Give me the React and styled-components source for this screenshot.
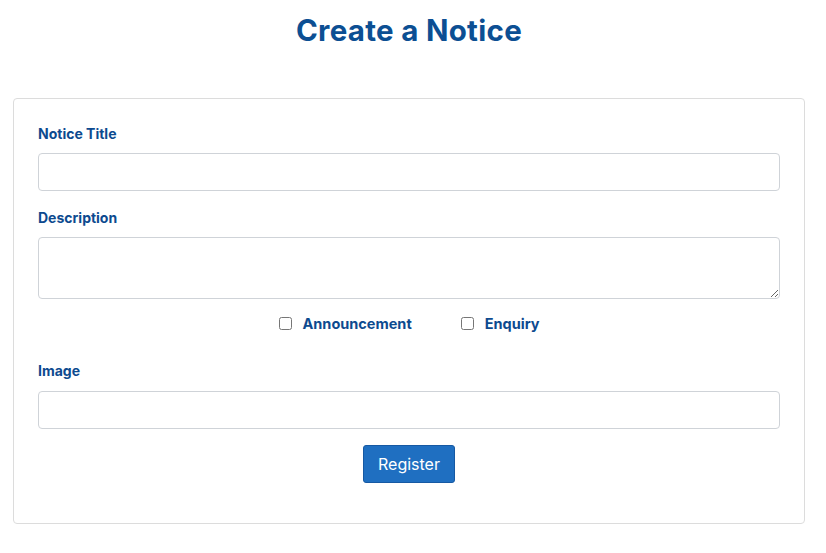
import React from "react";
import styled, { createGlobalStyle } from "styled-components";

const Global = createGlobalStyle`
  body {
    margin: 0;
    background: #ffffff;
    font-family: Inter, "Noto Sans", sans-serif;
  }
  * { box-sizing: border-box; }
`;

const App = () => {
  return (
    <>
      <Global />
      <S.Page>
        <S.Title>Create a Notice</S.Title>
        <S.Card>
          <S.Field>
            <S.Label>Notice Title</S.Label>
            <S.Input type="text" />
          </S.Field>
          <S.Field>
            <S.Label>Description</S.Label>
            <S.TextArea />
          </S.Field>
          <S.CheckRow>
            <S.Check>
              <input type="checkbox" />
              <span>Announcement</span>
            </S.Check>
            <S.Check>
              <input type="checkbox" />
              <span>Enquiry</span>
            </S.Check>
          </S.CheckRow>
          <S.Field>
            <S.Label $gap={12}>Image</S.Label>
            <S.Input type="text" />
          </S.Field>
          <S.BtnRow>
            <S.Button>Register</S.Button>
          </S.BtnRow>
        </S.Card>
      </S.Page>
    </>
  );
};

export default App;

const S = {
  Page: styled.div`
    padding: 0 21px 0 13px;
  `,

  Title: styled.h1`
    margin: 0;
    padding-top: 12px;
    height: 98px;
    text-align: center;
    font-size: 29.5px;
    font-weight: 700;
    color: #0c4f93;
    letter-spacing: 0.3px;
  `,

  Card: styled.div`
    border: 1px solid #dcdcdc;
    border-radius: 4px;
    padding: 26px 24px 40px;
    display: flex;
    flex-direction: column;
  `,

  Field: styled.div`
    display: flex;
    flex-direction: column;
    margin-bottom: 18px;
  `,

  Label: styled.label`
    font-size: 14px;
    font-weight: 700;
    color: #0d4a8f;
    margin-bottom: ${(p) => p.$gap || 11}px;
    line-height: 17px;
  `,

  Input: styled.input`
    height: 38px;
    border: 1px solid #cfd3d8;
    border-radius: 4px;
    padding: 0 12px;
    font-size: 14px;
    outline: none;
  `,

  TextArea: styled.textarea`
    height: 62px;
    border: 1px solid #cfd3d8;
    border-radius: 4px;
    padding: 6px 12px;
    font-size: 14px;
    outline: none;
    resize: vertical;
  `,

  CheckRow: styled.div`
    display: flex;
    justify-content: center;
    gap: 49px;
    margin-top: -2px;
    margin-bottom: 30px;
  `,

  Check: styled.label`
    display: flex;
    align-items: center;
    gap: 11px;
    font-size: 14.5px;
    font-weight: 700;
    color: #0d4a8f;

    input {
      margin: 0;
      width: 13px;
      height: 13px;
    }
  `,

  BtnRow: styled.div`
    display: flex;
    justify-content: center;
    margin-top: -2px;
  `,

  Button: styled.button`
    height: 38px;
    padding: 0 14px;
    background: #1f6fc1;
    border: 1px solid #1659a3;
    border-radius: 3px;
    color: #ffffff;
    font-family: Inter, "Noto Sans", sans-serif;
    font-size: 16px;
  `,
};
